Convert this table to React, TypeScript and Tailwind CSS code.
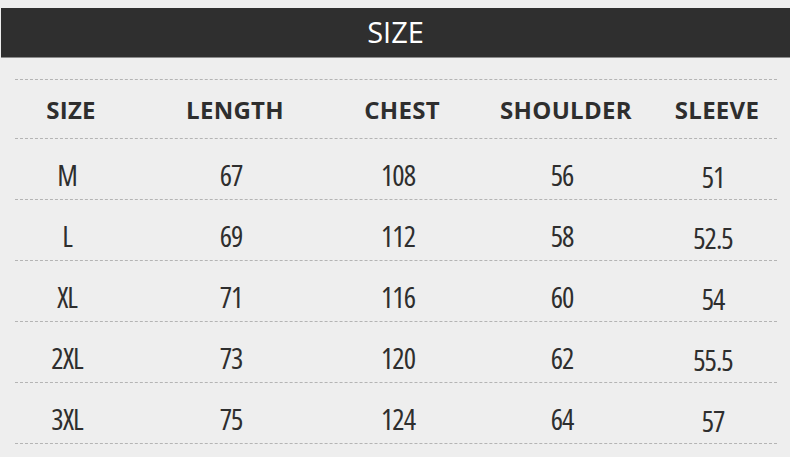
const headers = ['SIZE', 'LENGTH', 'CHEST', 'SHOULDER', 'SLEEVE'];

const rows = [
  ['M', '67', '108', '56', '51'],
  ['L', '69', '112', '58', '52.5'],
  ['XL', '71', '116', '60', '54'],
  ['2XL', '73', '120', '62', '55.5'],
  ['3XL', '75', '124', '64', '57'],
];

const grid = 'grid grid-cols-[164px_167px_164px_151px_116px] pl-[2px]';

export default function App() {
  return (
    <div className="w-[790px] h-[457px] bg-[#eeeeee] pt-2 font-['Open_Sans',sans-serif] font-stretch-condensed text-[#2e2e2e]">
      {/* Title bar */}
      <div className="ml-px h-[50px] bg-[#2f2f2f] border-b border-[#8c8c8c] flex items-center justify-center">
        <span className="text-white text-[29px] leading-none font-medium font-stretch-[90%] mt-[-2px]">SIZE</span>
      </div>

      {/* Size table */}
      <div className="mt-[21px] ml-[15px] w-[762px] border-t border-dashed border-[#b4b4b4]">
        <div className={`${grid} h-[59px] items-center border-b border-dashed border-[#b4b4b4]`}>
          {headers.map((h) => (
            <div
              key={h}
              className="w-[100px] pl-2 flex justify-center text-[24px] font-bold leading-none font-stretch-normal tracking-[0.3px] whitespace-nowrap pt-[2px]"
            >
              {h}
            </div>
          ))}
        </div>
        {rows.map((r) => (
          <div key={r[0]} className={`${grid} h-[61px] items-center border-b border-dashed border-[#b4b4b4]`}>
            {r.map((v, i) => (
              <div
                key={i}
                className={`w-[100px] text-center text-[29px] leading-none tracking-[-1px] whitespace-nowrap ${i === 4 ? 'pt-[14px]' : 'pt-[10px]'}`}
              >
                {v}
              </div>
            ))}
          </div>
        ))}
      </div>
    </div>
  );
}
